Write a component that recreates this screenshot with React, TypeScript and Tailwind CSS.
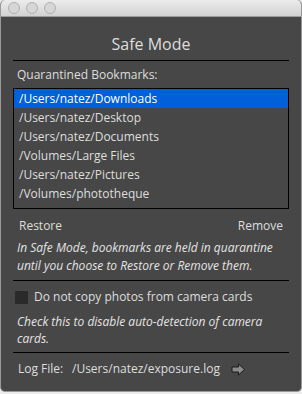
import React from "react";

const items = [
  "/Users/natez/Downloads",
  "/Users/natez/Desktop",
  "/Users/natez/Documents",
  "/Volumes/Large Files",
  "/Users/natez/Pictures",
  "/Volumes/phototheque",
];

export default function App() {
  return (
    <div className="w-[302px] h-[394px] bg-[#ececec]" style={{ fontFamily: '"Open Sans", sans-serif' }}>
      <div className="w-[302px] h-[392px] rounded-[5px] overflow-hidden bg-[#474747] flex flex-col border border-[#9a9a9a] border-t-0">
        <div className="h-[17px] shrink-0 bg-gradient-to-b from-[#ececec] to-[#d2d2d2] border-b border-[#9c9c9c] flex items-center gap-[6px] pl-[7px]">
          <div className="w-[12px] h-[12px] rounded-full bg-[#d6d6d6] border border-[#b0b0b0]" />
          <div className="w-[12px] h-[12px] rounded-full bg-[#d6d6d6] border border-[#b0b0b0]" />
          <div className="w-[12px] h-[12px] rounded-full bg-[#d6d6d6] border border-[#b0b0b0]" />
        </div>
        <div className="flex flex-col px-[12px] text-[#dedede]">
          <div className="text-[16px] leading-[20px] text-center pt-[17px] pb-[6px]">Safe Mode</div>
          <div className="h-px bg-black" />
          <div className="text-[12px] leading-[16px] pl-[4px] pt-[6px] pb-[5px]">Quarantined Bookmarks:</div>
          <div className="border border-black h-[121px] text-[12px]">
            {items.map((t, i) => (
              <div
                key={t}
                className={
                  "h-[19px] leading-[19px] pl-[5px] " + (i === 0 ? "bg-[#0060d9] text-white" : "")
                }
              >
                {t}
              </div>
            ))}
          </div>
          <div className="flex justify-between text-[12px] leading-[16px] px-[6px] pt-[9px]">
            <span>Restore</span>
            <span>Remove</span>
          </div>
          <div className="text-[12px] leading-[18px] italic font-medium pl-[4px] pt-[5px] pb-[5px] text-[#e4e4e4]">
            In Safe Mode, bookmarks are held in quarantine
            <br />
            until you choose to Restore or Remove them.
          </div>
          <div className="h-px bg-black" />
          <div className="flex items-center gap-[6px] pt-[8px] pl-[2px] text-[12px] leading-[16px]">
            <div className="w-[13px] h-[13px] bg-[#2a2a2a] rounded-[1px]" />
            <span>Do not copy photos from camera cards</span>
          </div>
          <div className="text-[12px] leading-[17px] italic font-medium pl-[4px] pt-[8px] pb-[5px] text-[#e4e4e4]">
            Check this to disable auto-detection of camera
            <br />
            cards.
          </div>
          <div className="h-px bg-black" />
          <div className="flex items-center text-[12px] leading-[16px] pl-[5px] pt-[8px]">
            <span className="w-[54px]">Log File:</span>
            <span>/Users/natez/exposure.log</span>
            <svg width="15" height="13" viewBox="0 0 15 13" className="ml-[11px]">
              <path d="M1 4 H7.5 V1 L13.5 6.5 L7.5 12 V9 H1 Z" fill="#8c8c8c" stroke="#1a1a1a" strokeWidth="1" />
            </svg>
          </div>
        </div>
      </div>
    </div>
  );
}
